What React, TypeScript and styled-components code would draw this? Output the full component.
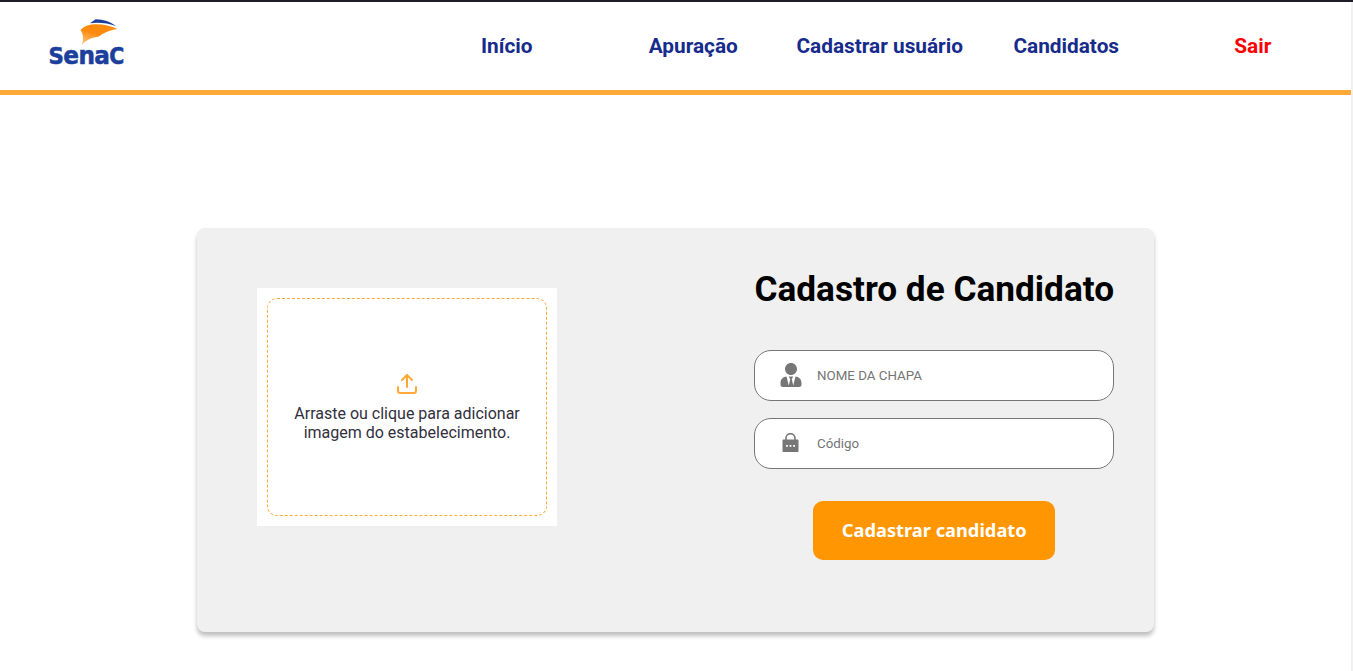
import React from "react";
import styled, { createGlobalStyle } from "styled-components";
import { FaUserTie } from "react-icons/fa";
import { FiUpload } from "react-icons/fi";

const GlobalStyle = createGlobalStyle`
  * { margin: 0; padding: 0; box-sizing: border-box; }
  body { background: #fff; font-family: Roboto, "Liberation Sans", sans-serif; overflow: hidden; }
`;

const Page = styled.div`
  height: 671px;
  border-top: 2px solid #201d2b;
  display: flex;
`;

const Content = styled.div`
  flex: 1;
  display: flex;
  flex-direction: column;
  align-items: center;
`;

const Gutter = styled.div`
  width: 2px;
  background: #f1f1f1;
`;

const Header = styled.header`
  width: 100%;
  height: 93px;
  border-bottom: 5px solid #ffa938;
  display: flex;
  align-items: center;
  justify-content: space-between;
  padding: 0 5px 0 47px;
`;

const Logo = styled.svg`
  width: 80px;
  height: 54px;
  display: block;
  margin-bottom: 2px;
  overflow: visible;
`;

const Nav = styled.nav`
  display: grid;
  grid-template-columns: repeat(5, 186.5px);
`;

const NavLink = styled.a<{ $danger?: boolean }>`
  text-align: center;
  font-size: 20.8px;
  line-height: 24px;
  font-weight: 700;
  color: ${(p) => (p.$danger ? "#ff0000" : "#162b8b")};
`;

const Card = styled.main`
  width: 957.5px;
  height: 404px;
  margin-top: 133px;
  padding: 0 40px 0 60px;
  background: #f0f0f0;
  border-radius: 8px;
  box-shadow: 0 4px 4px rgba(0, 0, 0, 0.25);
  display: flex;
  justify-content: space-between;
  align-items: flex-start;
`;

const Upload = styled.div`
  width: 300px;
  height: 238px;
  margin-top: 60px;
  padding: 10px;
  background: #fff;
`;

const DropArea = styled.div`
  height: 218px;
  border: 1px dashed #ffa938;
  border-radius: 10px;
  display: flex;
  flex-direction: column;
  align-items: center;
  justify-content: center;
  gap: 8px;
  font-size: 16px;
  line-height: 19px;
  text-align: center;
  color: #322f3d;

  p {
    padding-left: 0.6px;
  }

  svg {
    width: 24px;
    height: 24px;
    color: #ffa938;
  }
`;

const Form = styled.form`
  width: 360px;
  padding-top: 40px;
  display: flex;
  flex-direction: column;
`;

const Title = styled.h1`
  font-size: 35.2px;
  line-height: 42px;
  font-weight: 700;
  color: #000;
  text-align: center;
  white-space: nowrap;
  margin-bottom: 40px;
`;

const Field = styled.label`
  height: 51px;
  margin-bottom: 17px;
  border: 1px solid #767676;
  border-radius: 17px;
  background: #fff;
  display: flex;
  align-items: center;
`;

const FieldIcon = styled.span`
  width: 72px;
  padding: 0 1.4px 2px 0;
  display: flex;
  justify-content: center;
  color: #767676;
`;

const Input = styled.input`
  width: 240px;
  margin-left: -10.3px;
  border: 0;
  outline: 0;
  background: transparent;
  font: 13.33px Roboto, "Liberation Sans", sans-serif;

  &::placeholder { color: #757575; }
`;

const Submit = styled.button`
  width: 242px;
  height: 59px;
  margin-top: 15px;
  padding-bottom: 2px;
  align-self: center;
  border: 0;
  border-radius: 10px;
  background: #ff9602;
  color: #fff;
  font: 700 18.25px/22px "Noto Sans", "Open Sans", sans-serif;
  white-space: nowrap;
`;

const LockIcon = () => (
  <svg width="17" height="20" viewBox="0 0 17 20">
    <path d="M4 7V5.2a4.5 4.5 0 0 1 9 0V7" fill="none" stroke="currentColor" strokeWidth="1.6" />
    <path
      fill="currentColor"
      fillRule="evenodd"
      d="M1.3 6.5h14.4q.8 0 .8.8v10.9q0 .8-.8.8H1.3q-.8 0-.8-.8V7.3q0-.8.8-.8zM4 12v1.800h1.800v-1.800zM7.600 12v1.800h1.800v-1.800zM11.200 12v1.800h1.800v-1.800z"
    />
  </svg>
);

const SenacLogo = () => (
  <Logo viewBox="0 0 80 54" role="img" aria-label="Senac">
    <defs>
      <linearGradient id="sail" x1="0" y1="1" x2="0.35" y2="0.4">
        <stop offset="0" stopColor="#ffc98c" />
        <stop offset="1" stopColor="#ff8a0c" />
      </linearGradient>
    </defs>
    <path d="M43 5.2L48.5 1.2Q60 1 69.5 8.300Q57 3.800 43 5.200Z" fill="#1c3f9c" />
    <path d="M33.5 12Q38 6.800 47 6.300Q60 5.800 70.500 11Q59 12.500 52 18.500Q41 19.500 34.800 27Q38 18.500 33.500 12Z" fill="url(#sail)" />
    <g transform="translate(1.6 46.3) scale(0.91 1)">
      <text
        fontFamily="'DejaVu Sans', sans-serif"
        fontWeight="700"
        letterSpacing="-0.7"
        fill="#1c3f9c"
        stroke="#1c3f9c"
        strokeWidth="0.6"
      >
        <tspan fontSize="23.5">S</tspan>
        <tspan fontSize="25.5">ena</tspan>
        <tspan fontSize="22.5">C</tspan>
      </text>
    </g>
  </Logo>
);

export default function App() {
  return (
    <>
      <GlobalStyle />
      <Page>
        <Content>
          <Header>
            <SenacLogo />
            <Nav>
              <NavLink>Início</NavLink>
              <NavLink>Apuração</NavLink>
              <NavLink>Cadastrar usuário</NavLink>
              <NavLink>Candidatos</NavLink>
              <NavLink $danger>Sair</NavLink>
            </Nav>
          </Header>
          <Card>
            <Upload>
              <DropArea>
                <FiUpload />
                <p>
                  Arraste ou clique para adicionar
                  <br />
                  imagem do estabelecimento.
                </p>
              </DropArea>
            </Upload>
            <Form>
              <Title>Cadastro de Candidato</Title>
              <Field>
                <FieldIcon>
                  <FaUserTie size={24} />
                </FieldIcon>
                <Input placeholder="NOME DA CHAPA" />
              </Field>
              <Field>
                <FieldIcon>
                  <LockIcon />
                </FieldIcon>
                <Input placeholder="Código" />
              </Field>
              <Submit type="button">Cadastrar candidato</Submit>
            </Form>
          </Card>
        </Content>
        <Gutter />
      </Page>
    </>
  );
}
